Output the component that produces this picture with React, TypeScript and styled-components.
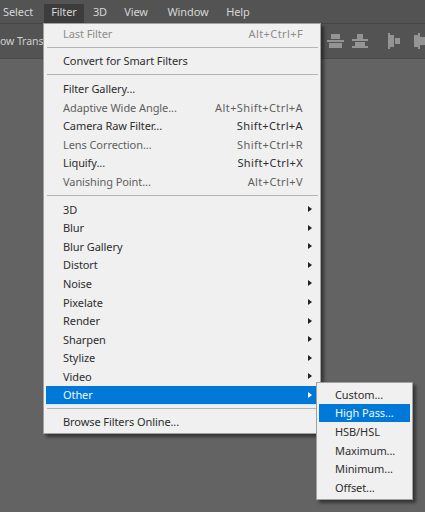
import React from 'react';
import styled, { createGlobalStyle } from 'styled-components';

const Global = createGlobalStyle`
  html, body {
    margin: 0;
    padding: 0;
    background: #636363;
  }
`;

const Page = styled.div`
  position: relative;
  width: 425px;
  height: 512px;
  overflow: hidden;
  background: #636363;
  font-family: 'Noto Sans', Tahoma, sans-serif;
  font-size: 11px;
  letter-spacing: -0.08px;
`;

const MenuBar = styled.div`
  display: flex;
  align-items: flex-end;
  height: 23px;
  background: #535353;
  border-bottom: 1px solid #454545;
`;

const MenuTitle = styled.div<{ $open?: boolean; $w: number; $inset?: number }>`
  width: ${(p) => p.$w}px;
  height: 19px;
  box-sizing: border-box;
  padding-right: ${(p) => p.$inset || 0}px;
  line-height: 16px;
  text-align: center;
  color: #d6d6d6;
  background: ${(p) => (p.$open ? '#3c3c3c' : 'transparent')};
`;

const OptionsBar = styled.div`
  display: flex;
  align-items: center;
  height: 34px;
  background: #535353;
  border-bottom: 1px solid #4a4a4a;
  color: #d0d0d0;
  font-size: 10.5px;
`;

const OptionsText = styled.span`
  width: 328px;
  white-space: nowrap;
`;

const AlignIcons = styled.div`
  display: flex;
  align-items: center;
  gap: 20px;
  color: #949494;
`;

const IconGroup = styled.div<{ $gap: number }>`
  display: flex;
  align-items: center;
  gap: ${(p) => p.$gap}px;
`;

const Dropdown = styled.div`
  position: absolute;
  left: 43px;
  top: 23px;
  width: 278px;
  padding: 0 2px 2px;
  box-sizing: border-box;
  background: #f0f0f0;
  border: 1px solid #a0a0a0;
  box-shadow: 3px 3px 3px rgba(0, 0, 0, 0.45);
`;

const SubDropdown = styled(Dropdown)`
  left: 316px;
  top: 382px;
  width: 97px;
  padding: 2px;
`;

const Item = styled.div<{ $active?: boolean; $muted?: boolean }>`
  display: flex;
  align-items: center;
  justify-content: space-between;
  height: 18.6px;
  padding: 0 6px 0 17px;
  white-space: nowrap;
  color: ${(p) => (p.$active ? '#f4f8fc' : p.$muted ? '#5f5f5f' : '#2e2e2e')};
  background: ${(p) => (p.$active ? '#0078d7' : 'transparent')};
`;

const OtherItem = styled(Item)`
  box-shadow: 0 1px 0 #cfe6f7;
`;

const SubItem = styled(Item)`
  padding-left: 16px;
`;

const Disabled = styled(Item)`
  color: #8c8c8c;
`;

const Keys = styled.span`
  margin-right: 9px;
  letter-spacing: 0.4px;
`;

const Separator = styled.div<{ $last?: boolean }>`
  height: 1px;
  margin: 4px 0 ${(p) => (p.$last ? 3 : 4)}px 1px;
  background: #b4b4b4;
`;

const Arrow = styled.span<{ $active?: boolean }>`
  width: 0;
  height: 0;
  border-top: 3.5px solid transparent;
  border-bottom: 3.5px solid transparent;
  border-left: 4px solid ${(p) => (p.$active ? '#ffffff' : '#222222')};
`;

const titles = [
  { label: 'Select', w: 44, inset: 8 },
  { label: 'Filter', w: 40, open: true },
  { label: '3D', w: 32 },
  { label: 'View', w: 40 },
  { label: 'Window', w: 64 },
  { label: 'Help', w: 36 },
];

const filterGroup = [
  { label: 'Filter Gallery...', keys: '' },
  { label: 'Adaptive Wide Angle...', keys: 'Alt+Shift+Ctrl+A', muted: true },
  { label: 'Camera Raw Filter...', keys: 'Shift+Ctrl+A' },
  { label: 'Lens Correction...', keys: 'Shift+Ctrl+R', muted: true },
  { label: 'Liquify...', keys: 'Shift+Ctrl+X' },
  { label: 'Vanishing Point...', keys: 'Alt+Ctrl+V', muted: true },
];

const subGroups = ['3D', 'Blur', 'Blur Gallery', 'Distort', 'Noise', 'Pixelate', 'Render', 'Sharpen', 'Stylize', 'Video'];

const otherItems = ['Custom...', 'High Pass...', 'HSB/HSL', 'Maximum...', 'Minimum...', 'Offset...'];

function AlignMiddle() {
  return (
    <svg width="17" height="16" viewBox="0 0 17 16" fill="currentColor">
      <rect x="4" y="1" width="9" height="5" />
      <rect x="0" y="7" width="17" height="2" />
      <rect x="2" y="10" width="13" height="5" />
    </svg>
  );
}

function AlignBottom() {
  return (
    <svg width="16" height="16" viewBox="0 0 16 16" fill="currentColor">
      <rect x="5" y="1" width="6" height="5" />
      <rect x="0" y="6" width="16" height="2" />
      <rect x="3" y="9" width="10" height="4" />
      <rect x="0" y="13" width="16" height="2" />
    </svg>
  );
}

function AlignLeftBars() {
  return (
    <svg width="12" height="16" viewBox="0 0 12 16" fill="currentColor">
      <rect x="0" y="0" width="2" height="16" />
      <rect x="2" y="2" width="4" height="12" />
      <rect x="7" y="5" width="5" height="6" />
    </svg>
  );
}

function AlignCenterBars() {
  return (
    <svg width="12" height="16" viewBox="0 0 12 16" fill="currentColor">
      <rect x="1" y="2" width="4" height="12" />
      <rect x="5" y="0" width="2" height="16" />
      <rect x="7" y="4" width="5" height="8" />
    </svg>
  );
}

export default function App() {
  return (
    <Page>
      <Global />
      <MenuBar>
        {titles.map((t) => (
          <MenuTitle key={t.label} $open={t.open} $w={t.w} $inset={t.inset}>
            {t.label}
          </MenuTitle>
        ))}
      </MenuBar>
      <OptionsBar>
        <OptionsText>ow Transf</OptionsText>
        <AlignIcons>
          <IconGroup $gap={8}>
            <AlignMiddle />
            <AlignBottom />
          </IconGroup>
          <IconGroup $gap={13}>
            <AlignLeftBars />
            <AlignCenterBars />
          </IconGroup>
        </AlignIcons>
      </OptionsBar>

      <Dropdown>
        <Disabled>
          <span>Last Filter</span>
          <Keys>Alt+Ctrl+F</Keys>
        </Disabled>
        <Separator />
        <Item>Convert for Smart Filters</Item>
        <Separator />
        {filterGroup.map((f) => (
          <Item key={f.label} $muted={f.muted}>
            <span>{f.label}</span>
            <Keys>{f.keys}</Keys>
          </Item>
        ))}
        <Separator />
        {subGroups.map((g) => (
          <Item key={g}>
            <span>{g}</span>
            <Arrow />
          </Item>
        ))}
        <OtherItem $active>
          <span>Other</span>
          <Arrow $active />
        </OtherItem>
        <Separator $last />
        <Item>Browse Filters Online...</Item>
      </Dropdown>

      <SubDropdown>
        {otherItems.map((o) => (
          <SubItem key={o} $active={o === 'High Pass...'}>
            {o}
          </SubItem>
        ))}
      </SubDropdown>
    </Page>
  );
}
